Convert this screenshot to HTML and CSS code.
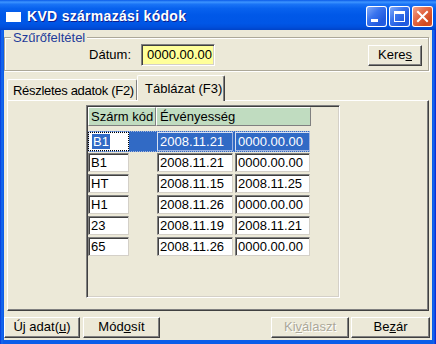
FILE: index.html
```html
<!DOCTYPE html>
<html>
<head>
<meta charset="utf-8">
<title>KVD származási kódok</title>
<link rel="stylesheet" href="styles.css">
</head>
<body>
<div class="window">
  <div class="titlebar">
    <span class="app-icon"></span>
    <span class="title">KVD származási kódok</span>
    <div class="caption-btns">
      <span class="cbtn">
        <svg width="21" height="21" viewBox="0 0 21 21"><rect x="5" y="13" width="7" height="3" fill="#fff"/></svg>
      </span>
      <span class="cbtn">
        <svg width="21" height="21" viewBox="0 0 21 21"><rect x="5.5" y="5.5" width="10" height="10" fill="none" stroke="#fff" stroke-width="1"/><rect x="5" y="5" width="11" height="3" fill="#fff"/></svg>
      </span>
      <span class="cbtn close">
        <svg width="21" height="21" viewBox="0 0 21 21"><path d="M6 6 L15 15 M15 6 L6 15" stroke="#fff" stroke-width="2" stroke-linecap="square"/></svg>
      </span>
    </div>
  </div>
  <div class="client">
    <div class="group">
      <span class="legend">Szűrőfeltétel</span>
      <span class="lbl">Dátum:</span>
      <div class="edit yellow">0000.00.00</div>
      <div class="btn keres">Kere<u>s</u></div>
    </div>
    <div class="tabs">
      <div class="tab">Részletes adatok (F2)</div>
      <div class="tab active">Táblázat (F3)</div>
    </div>
    <div class="panel">
      <div class="grid">
        <div class="ghead">
          <div class="hc h1">Szárm kód</div>
          <div class="hc h2">Érvényesség</div>
        </div>
        <div class="rows">
          <div class="grow sel">
            <div class="cell c1 focus"><span class="hl">B1</span></div>
            <div class="cell c2">2008.11.21</div>
            <div class="cell c3">0000.00.00</div>
          </div>
          <div class="grow">
            <div class="cell c1">B1</div>
            <div class="cell c2">2008.11.21</div>
            <div class="cell c3">0000.00.00</div>
          </div>
          <div class="grow">
            <div class="cell c1">HT</div>
            <div class="cell c2">2008.11.15</div>
            <div class="cell c3">2008.11.25</div>
          </div>
          <div class="grow">
            <div class="cell c1">H1</div>
            <div class="cell c2">2008.11.26</div>
            <div class="cell c3">0000.00.00</div>
          </div>
          <div class="grow">
            <div class="cell c1">23</div>
            <div class="cell c2">2008.11.19</div>
            <div class="cell c3">2008.11.21</div>
          </div>
          <div class="grow">
            <div class="cell c1">65</div>
            <div class="cell c2">2008.11.26</div>
            <div class="cell c3">0000.00.00</div>
          </div>
        </div>
      </div>
    </div>
    <div class="buttons">
      <div class="btn b1">Új adat(<u>u</u>)</div>
      <div class="btn b2">Mód<u>o</u>sít</div>
      <div class="spacer"></div>
      <div class="btn b3 disabled">Ki<u>v</u>álaszt</div>
      <div class="btn b4">Be<u>z</u>ár</div>
    </div>
  </div>
</div>
</body>
</html>
```
FILE: styles.css
```css
* { box-sizing: border-box; }
html, body { margin: 0; padding: 0; }
body {
  width: 436px;
  height: 344px;
  overflow: hidden;
  font-family: "Liberation Sans", Arial, sans-serif;
  font-size: 13px;
  color: #000;
  background: #0b5de8;
  white-space: nowrap;
}
.window {
  width: 436px;
  height: 344px;
  display: flex;
  flex-direction: column;
  background: linear-gradient(to right, #0831d9 0, #0a5ae6 1px, #1a6cf0 2px, #0b5de8 3px, #0b5de8 433px, #1a6cf0 434px, #0831d9 435px);
}
.titlebar {
  height: 30px;
  flex: none;
  display: flex;
  align-items: center;
  padding: 2px 3px 0 6px;
  background: linear-gradient(to bottom, #0a5ae8 0%, #3d95ff 7%, #1a74f6 14%, #0862ee 28%, #0058e8 50%, #0056e6 78%, #004fdc 90%, #0043c8 100%);
}
.app-icon {
  width: 15px;
  height: 10px;
  background: #fff;
  margin-right: 6px;
  margin-top: 1px;
}
.title {
  color: #fff;
  font-weight: bold;
  font-size: 14px;
  letter-spacing: 0.3px;
  text-shadow: 1px 1px 0 #0f1f8f;
}
.caption-btns {
  margin-left: auto;
  display: flex;
  gap: 2px;
  align-self: flex-start;
  margin-top: 4px;
}
.cbtn {
  width: 21px;
  height: 21px;
  border-radius: 3px;
  box-shadow: inset 0 0 0 1px #fff;
  background: linear-gradient(135deg, #8bb2fa 0%, #3a74ee 40%, #1f58de 75%, #2a62e6 100%);
  display: block;
}
.cbtn svg { display: block; }
.cbtn.close {
  background: linear-gradient(135deg, #f4ab95 0%, #e46a48 40%, #d1491f 75%, #da5630 100%);
}
.client {
  flex: 1;
  margin: 0 4px 4px 4px;
  background: #ece9d8;
  display: flex;
  flex-direction: column;
}
.group {
  position: relative;
  margin-top: 7px;
  margin-right: 3px;
  height: 34px;
  flex: none;
  border: 1px solid #aca899;
  box-shadow: inset 1px 1px 0 #fff, 1px 1px 0 #fff;
  display: flex;
  align-items: flex-start;
  padding-top: 6px;
}
.legend {
  position: absolute;
  left: 6px;
  top: -8px;
  padding: 0 2px;
  background: #ece9d8;
  color: #1e3c9a;
  line-height: 15px;
}
.lbl {
  width: 126px;
  text-align: right;
  line-height: 22px;
  margin-right: 10px;
}
.edit {
  width: 74px;
  height: 22px;
  border: 1px solid;
  border-color: #808080 #fff #fff #808080;
  box-shadow: inset 1px 1px 0 #404040, inset -1px -1px 0 #d4d0c8;
  padding-left: 5px;
  line-height: 20px;
}
.yellow { background: #ffff99; }
.btn {
  height: 21px;
  background: #ece9d8;
  border: 1px solid;
  border-color: #fff #404040 #404040 #fff;
  box-shadow: inset -1px -1px 0 #808080;
  text-align: center;
  line-height: 18px;
}
.btn u { text-decoration: underline; text-underline-offset: 1px; }
.keres {
  width: 54px;
  margin-top: 1px;
  margin-left: auto;
  margin-right: 6px;
}
.tabs {
  margin-top: 4px;
  height: 25px;
  display: flex;
  align-items: flex-end;
  padding-left: 3px;
  flex: none;
}
.tab {
  height: 21px;
  width: 130px;
  border-top: 1px solid #fff;
  border-left: 1px solid #fff;
  border-right: 1px solid #808080;
  border-radius: 2px 2px 0 0;
  padding: 1px 0 0 5px;
  line-height: 19px;
  background: #ece9d8;
  letter-spacing: -0.3px;
}
.tab.active {
  height: 26px;
  width: 88px;
  margin-bottom: -1px;
  position: relative;
  z-index: 1;
  padding: 3px 0 0 7px;
  border-right: 1px solid #404040;
  box-shadow: inset -1px 0 0 #808080;
  letter-spacing: 0;
}
.panel {
  margin: 0 3px 0 3px;
  height: 211px;
  flex: none;
  border: 1px solid;
  border-color: #fff #404040 #404040 #fff;
  box-shadow: inset -1px -1px 0 #808080;
  padding: 4px 0 0 78px;
}
.grid {
  width: 254px;
  height: 193px;
  border: 1px solid;
  border-color: #808080 #fff #fff #808080;
  box-shadow: inset 1px 1px 0 #404040, inset -1px -1px 0 #d4d0c8;
  padding: 1px;
  background: #ece9d8;
}
.ghead {
  display: flex;
  height: 19px;
}
.hc {
  height: 19px;
  background: #c0dcc0;
  border: 1px solid;
  border-color: #fff #808080 #808080 #fff;
  line-height: 17px;
  padding-left: 2px;
}
.h1 { width: 68px; }
.h2 { width: 155px; padding-left: 3px; }
.rows {
  margin-top: 5px;
}
.grow {
  display: flex;
  height: 21px;
  width: 222px;
}
.cell {
  margin-top: 1px;
  height: 19px;
  background: #fff;
  border: 1px solid;
  border-color: #808080 #d4d0c8 #d4d0c8 #808080;
  box-shadow: inset 1px 1px 0 #404040;
  line-height: 17px;
  padding-left: 2px;
  overflow: hidden;
}
.c1 { width: 41px; }
.c2 { width: 76px; margin-left: 28px; }
.c3 { width: 75px; margin-left: 2px; }
.grow.sel {
  background: #316ac5;
  outline: 1px dotted #a8b8dc;
  outline-offset: -1px;
}
.grow.sel .cell {
  background: #316ac5;
  color: #fff;
  border-color: #d8e0f0 #9fb4e0 #9fb4e0 #d8e0f0;
  box-shadow: none;
}
.grow.sel .cell.focus {
  background: #fff;
  border: 1px dotted #000;
  padding-left: 3px;
}
.hl {
  background: #316ac5;
  color: #fff;
  padding: 0 1px;
}
.buttons {
  margin-top: 6px;
  height: 21px;
  display: flex;
  flex: none;
  margin-right: 2px;
}
.b1 { width: 76px; }
.b2 { width: 77px; margin-left: 3px; }
.spacer { flex: 1; }
.b3 { width: 78px; }
.b4 { width: 79px; margin-left: 2px; }
.disabled {
  color: #aca899;
  text-shadow: 1px 1px 0 #fff;
}
```
